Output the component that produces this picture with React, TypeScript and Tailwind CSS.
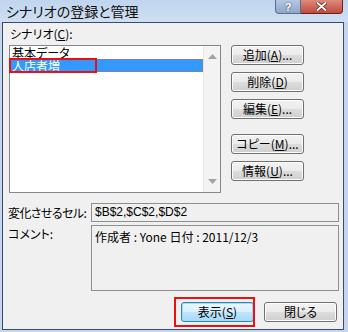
import React from "react"

const jp = {
  fontFamily: '"MS UI Gothic", "Noto Sans CJK JP", "Liberation Sans", sans-serif',
  fontFeatureSettings: '"palt"',
}

const Btn = ({ label, u, rest, def }: { label: string; u: string; rest: string; def?: boolean }) => (
  <div
    className={`flex items-center justify-center w-[73px] h-[20px] rounded-[3px] border text-[12px] leading-none text-black whitespace-nowrap ${
      def
        ? "border-[#3c7fb1] bg-[linear-gradient(#eaf6fd_0%,#d9f0fc_50%,#bee6fd_50%,#a7d9f5_100%)] shadow-[inset_0_0_0_1px_#8ee4fb]"
        : "border-[#707070] bg-[linear-gradient(#f2f2f2_0%,#ebebeb_50%,#dddddd_50%,#cfcfcf_100%)] shadow-[inset_0_0_0_1px_#fcfcfc]"
    }`}
  >
    <span>
      {label}(<span className="underline underline-offset-1">{u}</span>){rest}
    </span>
  </div>
)

export default function App() {
  return (
    <div className="w-[348px] h-[332px] flex flex-col bg-[#c3d6ee] overflow-hidden" style={jp}>
      {/* title bar */}
      <div className="relative h-[22px] flex items-center pl-[6px] bg-[linear-gradient(#c0d5ee,#cfdff3)]">
        <span className="text-[14px] leading-[16px] text-[#101010] whitespace-nowrap">シナリオの登録と管理</span>
        <div className="absolute top-0 left-[275px] flex">
          <div className="w-[26px] h-[14px] rounded-bl-[4px] border border-t-0 border-[#5a6f8c] bg-[linear-gradient(#b5c8e2,#8da7c9)] flex items-center justify-center text-white text-[11px] font-bold leading-[12px] [text-shadow:0_0_2px_#333]" style={{ fontFamily: '"Liberation Sans", sans-serif' }}>
            ?
          </div>
          <div className="w-[42px] h-[14px] rounded-br-[4px] border border-t-0 border-l-0 border-[#6b2020] bg-[linear-gradient(#dd8a7e,#c24a3b)] flex items-center justify-center">
            <svg width="11" height="9" viewBox="0 0 11 9">
              <path d="M1.5 1 L9.5 8 M9.5 1 L1.5 8" stroke="#5a1a14" strokeWidth="3.4" strokeLinecap="round" />
              <path d="M1.5 1 L9.5 8 M9.5 1 L1.5 8" stroke="#ffffff" strokeWidth="2" strokeLinecap="round" />
            </svg>
          </div>
        </div>
      </div>

      {/* body */}
      <div className="ml-[2px] mr-[4px] h-[308px] border border-[#394c68] bg-[#f0f0f0] flex flex-col text-[12px] text-black">
        <div className="pl-[7px] pt-[4px] h-[18px] leading-[14px] whitespace-nowrap">
          シナリオ(<span className="underline">C</span>):
        </div>

        <div className="flex mt-[4px]">
          {/* list */}
          <div className="relative ml-[6px] w-[212px] h-[148px] border border-[#828790] bg-white flex">
            <div className="flex-1 flex flex-col">
              <div className="h-[13px] pl-[2px] leading-[13px]">基本データ</div>
              <div className="h-[13px] pl-[2px] leading-[13px] bg-[#3399ff] text-white outline-1 outline-dotted outline-[#c07030] -outline-offset-1">
                人店者増
              </div>
            </div>
            <div className="w-[17px] h-full bg-[#f3f3f3] border-l border-[#e8e8e8] flex flex-col items-center justify-between py-[8px]">
              <svg width="9" height="5" viewBox="0 0 9 5">
                <path d="M0 5 L4.5 0 L9 5 Z" fill="#a3a3a3" />
              </svg>
              <svg width="9" height="5" viewBox="0 0 9 5">
                <path d="M0 0 L9 0 L4.5 5 Z" fill="#a3a3a3" />
              </svg>
            </div>
            <div className="absolute left-[-1px] top-[12px] w-[88px] h-[15px] border-2 border-[#e81010]" />
          </div>

          {/* buttons */}
          <div className="ml-[10px] flex flex-col">
            <Btn label="追加" u="A" rest="..." />
            <div className="mt-[7px]"><Btn label="削除" u="D" rest="" /></div>
            <div className="mt-[7px]"><Btn label="編集" u="E" rest="..." /></div>
            <div className="mt-[15px]"><Btn label="コピー" u="M" rest="..." /></div>
            <div className="mt-[7px]"><Btn label="情報" u="U" rest="..." /></div>
          </div>
        </div>

        <div className="flex mt-[10px]">
          <div className="w-[88px] pl-[5px] pt-[3px] leading-[14px] whitespace-nowrap tracking-[-0.6px]">変化させるセル:</div>
          <div className="w-[248px] h-[19px] border border-[#8e8f8f] bg-[#f0f0f0] pl-[3px] leading-[17px]" style={{ fontFamily: '"Liberation Sans", "Noto Sans CJK JP", sans-serif' }}>
            $B$2,$C$2,$D$2
          </div>
        </div>

        <div className="flex mt-[3px]">
          <div className="w-[88px] pl-[5px] pt-[2px] leading-[14px] whitespace-nowrap">コメント:</div>
          <div className="w-[248px] h-[66px] border border-[#8e8f8f] bg-[#f0f0f0] pl-[3px] pt-[3px] leading-[15px]">
            作成者 : Yone 日付 : 2011/12/3
          </div>
        </div>

        <div className="flex justify-end gap-[10px] mt-[11px] pr-[6px]">
          <div className="relative">
            <Btn label="表示" u="S" rest="" def />
            <div className="absolute left-[-7px] top-[-5px] w-[81px] h-[30px] border-2 border-[#e81010]" />
          </div>
          <div className="flex items-center justify-center w-[73px] h-[20px] rounded-[3px] border border-[#707070] bg-[linear-gradient(#f2f2f2_0%,#ebebeb_50%,#dddddd_50%,#cfcfcf_100%)] shadow-[inset_0_0_0_1px_#fcfcfc] text-[12px] leading-none">
            閉じる
          </div>
        </div>
      </div>
    </div>
  )
}
